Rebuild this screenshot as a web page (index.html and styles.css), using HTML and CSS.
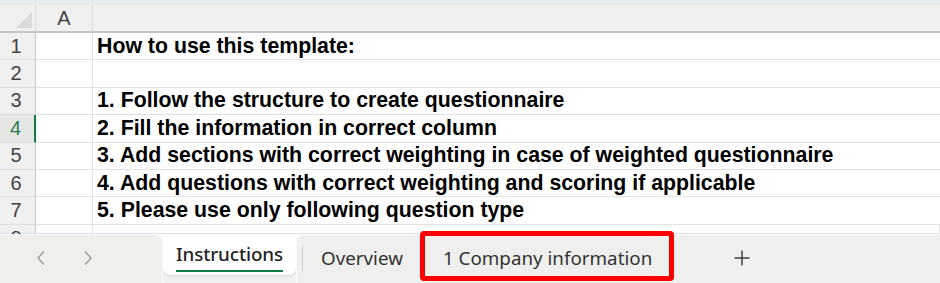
FILE: index.html
```html
<!DOCTYPE html>
<html>
<head>
<meta charset="utf-8">
<link rel="stylesheet" href="styles.css">
</head>
<body>
<div class="app">
  <div class="topstrip"></div>
  <div class="sheet">
    <div class="corner"><span class="tri"></span></div>
    <div class="colhead">A</div>
    <div class="colhead rest"></div>

    <div class="rowhead">1</div><div class="cell"></div><div class="cell text">How to use this template:</div>
    <div class="rowhead">2</div><div class="cell"></div><div class="cell text"></div>
    <div class="rowhead">3</div><div class="cell"></div><div class="cell text">1. Follow the structure to create questionnaire</div>
    <div class="rowhead active">4</div><div class="cell"></div><div class="cell text">2. Fill the information in correct column</div>
    <div class="rowhead">5</div><div class="cell"></div><div class="cell text">3. Add sections with correct weighting in case of weighted questionnaire</div>
    <div class="rowhead">6</div><div class="cell"></div><div class="cell text">4. Add questions with correct weighting and scoring if applicable</div>
    <div class="rowhead">7</div><div class="cell"></div><div class="cell text">5. Please use only following question type</div>
    <div class="rowhead part">8</div><div class="cell part"></div><div class="cell part"></div>
  </div>
  <div class="tabbar">
    <div class="nav">
      <svg class="chev" width="10" height="16" viewBox="0 0 10 16"><polyline points="8,1.5 2,8 8,14.5" fill="none" stroke="#9b9b9b" stroke-width="1.4"/></svg>
      <svg class="chev" width="10" height="16" viewBox="0 0 10 16"><polyline points="2,1.5 8,8 2,14.5" fill="none" stroke="#9b9b9b" stroke-width="1.4"/></svg>
    </div>
    <div class="activewrap">
      <div class="tab active"><span class="label">Instructions</span></div>
    </div>
    <div class="others">
      <span class="sep"></span>
      <div class="tab">Overview</div>
      <div class="tab company">1 Company information</div>
      <div class="plus">
        <svg width="18" height="18" viewBox="0 0 18 18"><path d="M9 1.5V16.5M1.5 9H16.5" stroke="#454545" stroke-width="1.5" fill="none"/></svg>
      </div>
    </div>
    <div class="highlight"></div>
  </div>
</div>
</body>
</html>
```
FILE: styles.css
```css
* { box-sizing: border-box; }
html, body { margin: 0; padding: 0; }
body {
  width: 940px;
  height: 283px;
  overflow: hidden;
  background: #fff;
  font-family: "Liberation Sans", Arial, sans-serif;
}
.app { width: 940px; height: 283px; display: flex; flex-direction: column; }
.topstrip { height: 5px; background: #e7edef; flex: none; }

.sheet {
  display: grid;
  grid-template-columns: 36px 57px 1fr;
  grid-template-rows: 28px repeat(7, 27.4px) 9.2px;
  flex: none;
  overflow: hidden;
}
.corner, .colhead {
  background: #f0f0f0;
  border-bottom: 2px solid #c4c4c4;
}
.corner { position: relative; border-right: 1px solid #dcdcdc; }
.tri {
  position: absolute;
  left: 16px; top: 7px;
  width: 16px; height: 16px;
  background: #dadada;
  clip-path: polygon(100% 0, 100% 100%, 0 100%);
}
.colhead {
  font-size: 20px;
  color: #444;
  display: flex;
  align-items: center;
  justify-content: center;
  padding-top: 1px;
  border-right: 1px solid #dcdcdc;
}
.colhead.rest { border-right: none; }

.rowhead {
  background: #f0f0f0;
  border-right: 1px solid #c8c8c8;
  border-bottom: 1px solid #dedede;
  font-size: 20px;
  color: #444;
  display: flex;
  align-items: center;
  justify-content: center;
  padding-right: 3px;
}
.rowhead.active {
  background: #e4e7e4;
  color: #2d7a52;
  border-right: 2.5px solid #107c41;
}
.cell {
  border-bottom: 1px solid #e2e2e2;
  border-right: 1px solid #e2e2e2;
}
.cell.text {
  border-right: none;
  font-weight: bold;
  font-size: 21.3px;
  color: #000;
  display: flex;
  align-items: center;
  padding-left: 4px;
  white-space: nowrap;
}
.rowhead.part { align-items: flex-start; padding-top: 3px; line-height: 1; }

.tabbar {
  position: relative;
  flex: 1;
  display: flex;
  background: #fff;
  font-family: "Noto Sans", "Open Sans", sans-serif;
}
.nav {
  width: 162px;
  margin-top: 1px;
  background: #f1efec;
  border-top-right-radius: 7px;
  display: flex;
  align-items: center;
  padding-left: 36px;
  gap: 37px;
  padding-bottom: 2px;
}
.activewrap {
  width: 133px;
  margin-left: 1px;
  background: #f1f0ee;
  display: flex;
  flex-direction: column;
}
.tab.active {
  height: 41px;
  background: #fff;
  border-radius: 0 0 7px 7px;
  box-shadow: 0 1px 2px rgba(0,0,0,0.12);
  display: flex;
  justify-content: center;
  padding-top: 7px;
}
.tab.active .label {
  font-size: 18.8px;
  font-weight: 500;
  color: #222;
  height: 31px;
  border-bottom: 2.5px solid #107c41;
  letter-spacing: -0.1px;
}
.others {
  flex: 1;
  margin-top: 1px;
  margin-left: 1px;
  background: #eff0ee;
  border-top-left-radius: 7px;
  display: flex;
  align-items: center;
  padding-bottom: 2px;
}
.sep {
  width: 1px;
  height: 26px;
  background: #cfcfcf;
  margin-left: 5px;
}
.tab {
  font-size: 18.8px;
  color: #333;
}
.others .tab { margin-left: 18px; }
.others .tab.company { margin-left: 40px; }
.plus { margin-left: 81px; display: flex; padding-top: 1px; }
.highlight {
  position: absolute;
  left: 420px;
  top: -3px;
  width: 254px;
  height: 50px;
  border: 5px solid #ff0000;
  border-radius: 4px;
}
```
